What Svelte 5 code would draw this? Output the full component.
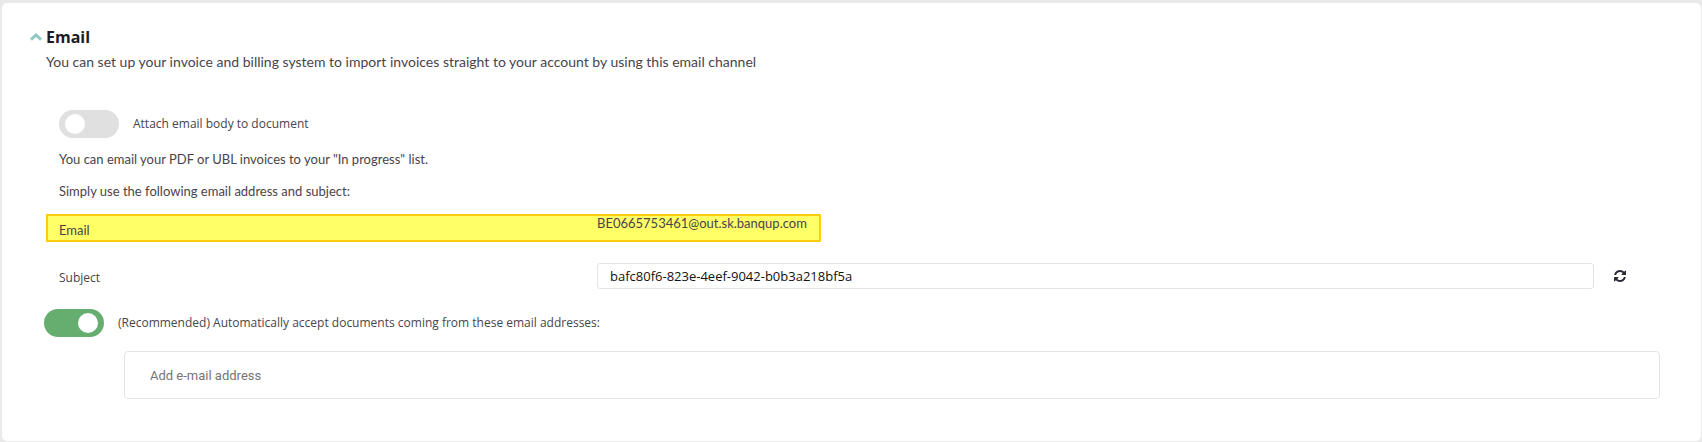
<script>
  let open = true;
  let attachBody = false;
  let autoAccept = true;
  let email = "BE0665753461@out.sk.banqup.com";
  let subject = "bafc80f6-823e-4eef-9042-b0b3a218bf5a";
  let newAddress = "";

  function refreshSubject() {
    subject = crypto.randomUUID();
  }
</script>

<section class="card">
  <header>
    <button class="collapse" aria-label="Toggle email section" aria-expanded={open} on:click={() => (open = !open)}>
      <svg class:closed={!open} viewBox="0 0 12 8" width="12" height="8">
        <path d="M1 6.600 6 2l5 4.600" fill="none" stroke="#8fc7c1" stroke-width="2.800" />
      </svg>
    </button>
    <h2>Email</h2>
  </header>
  <p class="intro">You can set up your invoice and billing system to import invoices straight to your account by using this email channel</p>

  {#if open}
    <label class="switch attach">
      <input type="checkbox" bind:checked={attachBody} />
      <span>Attach email body to document</span>
    </label>

    <div class="hints">
      <p>You can email your PDF or UBL invoices to your "In progress" list.</p>
      <p>Simply use the following email address and subject:</p>
    </div>

    <div class="row highlighted">
      <span class="label lato">Email</span>
      <span class="value">{email}</span>
    </div>

    <div class="row subject">
      <label class="label" for="subject">Subject</label>
      <div class="field">
        <input id="subject" type="text" bind:value={subject} />
        <button class="refresh" aria-label="Refresh subject" on:click={refreshSubject}>
          <svg viewBox="0 0 1536 1536" width="12" height="12">
            <path fill="#2b2a33" d="M1511 928q0 5-1 7-64 268-268 434.500t-478 166.500q-146 0-282.500-55t-243.500-157l-129 129q-19 19-45 19t-45-19-19-45v-448q0-26 19-45t45-19h448q26 0 45 19t19 45-19 45l-137 137q71 66 161 102t187 36q134 0 250-65t186-179q11-17 53-117 8-23 30-23h192q13 0 22.500 9.500t9.500 22.500zm25-800v448q0 26-19 45t-45 19h-448q-26 0-45-19t-19-45 19-45l138-138q-148-137-349-137-134 0-250 65t-186 179q-11 17-53 117-8 23-30 23h-199q-13 0-22.500-9.500t-9.500-22.500v-7q65-268 270-434.500t480-166.500q146 0 284 55.500t245 156.500l130-129q19-19 45-19t45 19 19 45z" />
          </svg>
        </button>
      </div>
    </div>

    <label class="switch accept">
      <input type="checkbox" bind:checked={autoAccept} />
      <span>(Recommended) Automatically accept documents coming from these email addresses:</span>
    </label>

    <input class="address" type="email" aria-label="Add e-mail address" placeholder="Add e-mail address" bind:value={newAddress} />
  {/if}
</section>

<style>
  :global(body) {
    background: #e9e9e9;
  }

  .card {
    margin: 3px 1px 1px 2px;
    padding: 24px 41px 42px 44px;
    background: #fff;
    border-radius: 5px;
    color: #48444d;
    font-family: "Open Sans", sans-serif;
    font-size: 12px;
  }

  header {
    display: flex;
    align-items: center;
    gap: 4px;
    margin-left: -16px;
    height: 20px;
  }

  h2 {
    margin: 0;
    font-size: 16px;
    line-height: 20px;
    font-weight: 700;
    color: #1d1b20;
  }

  button {
    display: flex;
    padding: 0;
    border: 0;
    background: none;
    cursor: pointer;
  }

  .closed {
    transform: rotate(180deg);
  }

  p {
    margin: 0;
    font-family: Lato, sans-serif;
    line-height: 20px;
  }

  .intro {
    margin-top: 5px;
    margin-bottom: 38px;
    font-size: 14px;
  }

  .hints {
    display: grid;
    gap: 12px;
    margin: 11px 13px 13px;
    font-size: 13px;
  }

  .switch {
    display: flex;
    align-items: center;
    gap: 14px;
    width: fit-content;
  }

  .switch span {
    padding-bottom: 2px;
  }

  .switch input {
    appearance: none;
    flex: none;
    width: 60px;
    height: 28px;
    margin: 0;
    padding: 4px 6px;
    box-sizing: border-box;
    border-radius: 14px;
    background: #e0e0e0;
    display: flex;
    cursor: pointer;
  }

  .switch input::before {
    content: "";
    width: 20px;
    height: 20px;
    border-radius: 50%;
    background: #fff;
  }

  .switch input:checked {
    justify-content: flex-end;
    background: #66ae70;
  }

  .attach {
    margin-left: 13px;
  }

  .accept {
    margin: 20px 0 14px -2px;
  }

  .row {
    display: grid;
    grid-template-columns: 1fr 2fr;
    line-height: 20px;
  }

  .label,
  .value,
  .field {
    padding-left: 13px;
  }

  .lato,
  .value {
    font-family: Lato, sans-serif;
    font-size: 13px;
  }

  .value {
    line-height: 18px;
  }

  .highlighted {
    position: relative;
    z-index: 0;
    height: 28px;
  }

  /* marker box behind the email row */
  .highlighted::before {
    content: "";
    position: absolute;
    z-index: -1;
    inset: 0 52% 0 0;
    box-sizing: border-box;
    border: 2px solid #ffcc11;
    background: #ffff66;
  }

  .highlighted .label {
    padding-top: 6px;
  }

  .subject {
    align-items: center;
    margin-top: 21px;
  }

  .subject .label {
    padding-top: 4px;
  }

  .field {
    display: flex;
    align-items: center;
    gap: 20px;
    padding-right: 34px;
  }

  .field input {
    flex: 1;
    min-width: 0;
    height: 26px;
    box-sizing: border-box;
    padding: 0 12px;
    border: 1px solid #e4e4e4;
    border-radius: 3px;
    font: 13px "Open Sans", sans-serif;
    color: #111;
  }

  .address {
    display: block;
    width: calc(100% - 78px);
    height: 48px;
    box-sizing: border-box;
    margin-left: 78px;
    padding: 0 25px;
    border: 1px solid #e4e4e4;
    border-radius: 4px;
    font: 13px Roboto, sans-serif;
    color: #48444d;
  }

  .address::placeholder {
    color: #757575;
  }
</style>
